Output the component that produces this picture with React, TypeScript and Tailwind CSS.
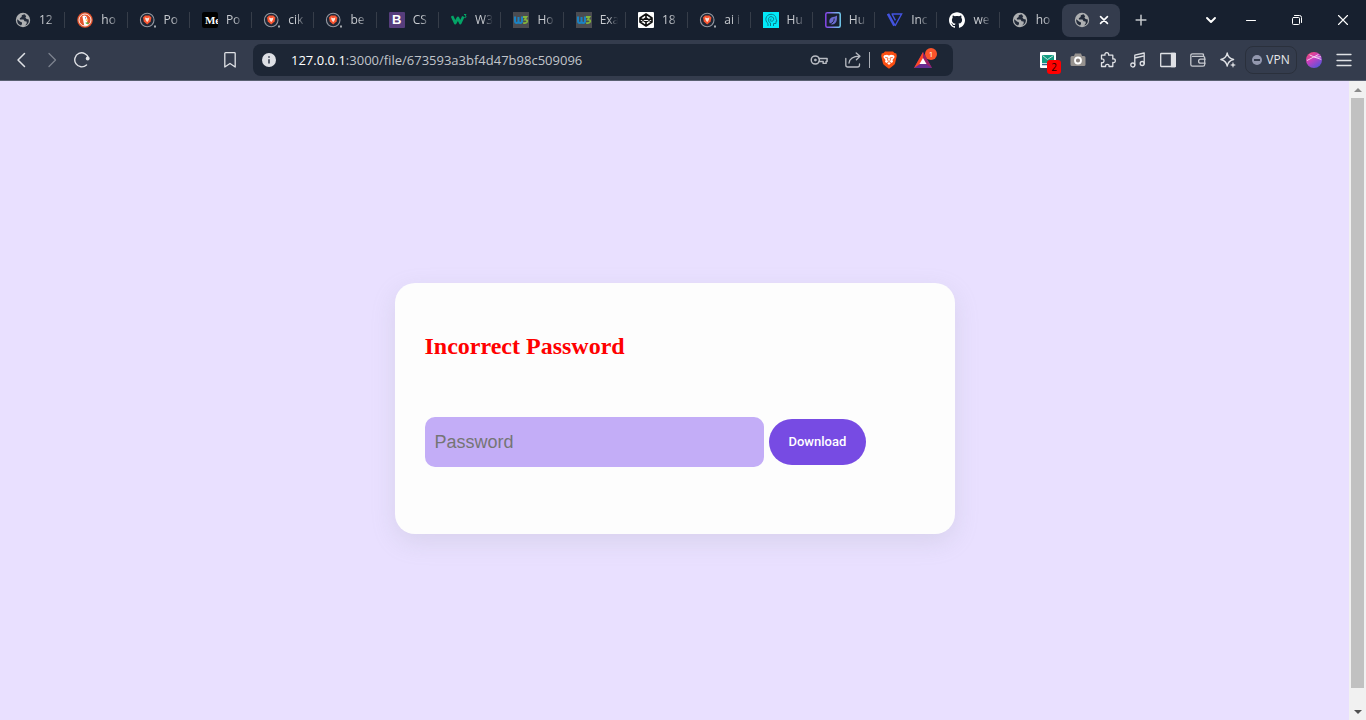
import type { ReactNode } from "react";
import { SiCodepen, SiGithub } from "react-icons/si";

const Globe = () => (
  <svg viewBox="0 0 16 16" className="size-4">
    <circle cx="8" cy="8" r="7.2" fill="#adafb1" />
    <path
      d="M9.5 2.2 L6.8 3.2 L6.6 5 L4.8 6.2 L5 7.6 L8.5 7.4 L9.6 9.2 L11.6 9.4 L11.8 11.2 L10.2 13.6 A6 6 0 0 0 13.8 7.4 L11.6 7 L10.4 5.6 L11.2 4.2 Z M2.2 7.2 L5 9.4 L7 10.4 L7 12 L6 13.6 A6 6 0 0 1 2.2 7.2 Z"
      fill="#232b3a"
    />
  </svg>
);

const BraveSearch = () => (
  <svg viewBox="0 0 16 16" className="size-4 overflow-visible">
    <circle cx="7.2" cy="8" r="6.8" fill="#202736" stroke="#9297a0" strokeWidth="1.1" />
    <path d="M5 3.6 H9.4 L11.4 5.4 L10.6 9.6 L7.2 12.6 L3.8 9.6 L3 5.4 Z" fill="#fa5530" />
    <path d="M5 5.6 L7.2 6.2 L9.4 5.6 L8.8 8 L7.2 10.2 L5.6 8 Z" fill="#fbe3da" />
    <rect x="14" y="13.5" width="2" height="2" fill="#a3a7ae" />
  </svg>
);

const Duck = () => (
  <svg viewBox="0 0 16 16" className="size-4">
    <circle cx="8" cy="8" r="7.8" fill="#e2522b" />
    <circle cx="8" cy="8" r="6" fill="none" stroke="#fff" strokeWidth="0.9" />
    <path d="M5.4 4.2 C7 2.8 10 3.4 10.2 6.6 L10.6 9 L9.8 10 L11 13 Q9 14.2 7.2 13.6 Z" fill="#fff" />
    <path d="M8.6 7.6 L12 7.8 L9 9 Z" fill="#fcb929" />
    <path d="M8.4 10.4 L11.6 10.2 L11.4 12.2 L9 11.8 Z" fill="#5bb53f" />
    <circle cx="8.6" cy="5.8" r="0.6" fill="#2d4f8e" />
  </svg>
);

const MeMark = () => (
  <span className="flex size-4 items-center overflow-hidden rounded-[2px] bg-black pl-[3px] font-['Liberation_Serif',serif] text-[11px] leading-4 font-bold text-white">
    Me
  </span>
);

const Bootstrap = () => (
  <span className="grid size-4 place-items-center rounded-[1px] bg-[#563d7c] font-['Liberation_Sans',sans-serif] text-[13px] leading-4 font-bold text-white">
    B
  </span>
);

const W3Schools = () => (
  <svg viewBox="0 0 16 16" className="size-4" fill="none" stroke="#04a467">
    <path d="M1 4 L4.2 11 L7 6 L9.3 11 L12.3 4.5" strokeWidth="2.7" strokeLinejoin="round" />
    <path d="M13 2.5 H15 L14 4 C15.8 4 15.2 6.2 13.4 5.6" strokeWidth="1" />
  </svg>
);

const W3Docs = () => (
  <svg viewBox="0 0 16 16" className="size-4" fill="none">
    <rect width="16" height="16" fill="#4b4c51" />
    <path d="M2 4.5 V9 Q2 11 3.8 11 Q5.5 11 5.5 9 V5 M5.5 9 Q5.5 11 7.2 11 Q9 11 9 9 V4.5" stroke="#1b83c4" strokeWidth="2" />
    <path d="M10 5 H13.5 L11.8 7.6 Q14.4 7.6 14.2 9.4 Q13.8 11.4 10.2 11" stroke="#82b53c" strokeWidth="1.8" />
  </svg>
);

const Codepen = () => (
  <span className="grid size-4 place-items-center rounded-[1px] bg-white">
    <svg viewBox="0 0 16 16" className="size-4" fill="none" stroke="#111" strokeWidth="1.6" strokeLinejoin="round">
      <path d="M8 2 L14 6 V10 L8 14 L2 10 V6 Z M8 2 V6 M8 10 V14 M2 6 L8 10 L14 6 M2 10 L8 6 L14 10" />
    </svg>
  </span>
);

const Head = () => (
  <svg viewBox="0 0 16 16" className="size-4" fill="none" stroke="#087d8d" strokeWidth="1">
    <rect width="16" height="16" fill="#02e9f8" stroke="none" />
    <path d="M5 14 V11.5 C1.5 9 2.2 2.5 8 2.3 C12 2.3 13 5 13 7 L14 9.2 H13 V11.5 H10.5 V14" />
    <path d="M7.5 14 V11 C4.8 10 4.4 5 8 4.6 C11.6 4.6 11.4 9.4 8.5 9.2 C6.4 9 6.8 6.6 8.5 7" />
  </svg>
);

const Leaf = () => (
  <svg viewBox="0 0 16 16" className="size-4" fill="none">
    <defs>
      <linearGradient id="leaf" x1="0" y1="0" x2="1" y2="0">
        <stop stopColor="#8545e8" />
        <stop offset="1" stopColor="#72c9ee" />
      </linearGradient>
    </defs>
    <rect x="0.8" y="0.8" width="14.4" height="14.4" rx="1.5" stroke="url(#leaf)" strokeWidth="1.5" />
    <path d="M12 3.5 C12 8 12 12 7 12.5 C3.5 12.5 3.5 7 6.5 5.5 C8.5 4.6 10.5 5 12 3.5 Z" fill="#6b6bd0" />
    <path d="M5 12 C8 11 9.2 9 9.2 6.5" stroke="#1c2333" />
  </svg>
);

const Vee = () => (
  <svg viewBox="0 0 16 16" className="size-4" fill="none" stroke="#4353e0">
    <path d="M1 1.8 L7.4 13.6" strokeWidth="2.6" />
    <path d="M4.6 2 H14.6 L8 14 M5 2 L8.4 8.4" strokeWidth="1.4" />
  </svg>
);

const Github = () => <SiGithub className="size-4 text-white" />;

const tabs: { label: string; icon: ReactNode }[] = [
  { label: "12", icon: <Globe /> },
  { label: "ho", icon: <Duck /> },
  { label: "Po", icon: <BraveSearch /> },
  { label: "Po", icon: <MeMark /> },
  { label: "cik", icon: <BraveSearch /> },
  { label: "be", icon: <BraveSearch /> },
  { label: "CS", icon: <Bootstrap /> },
  { label: "W3", icon: <W3Schools /> },
  { label: "Ho", icon: <W3Docs /> },
  { label: "Exa", icon: <W3Docs /> },
  { label: "18", icon: <Codepen /> },
  { label: "ai i", icon: <BraveSearch /> },
  { label: "Hu", icon: <Head /> },
  { label: "Hu", icon: <Leaf /> },
  { label: "Inc", icon: <Vee /> },
  { label: "we", icon: <Github /> },
  { label: "ho", icon: <Globe /> },
];

function Glyph({ children, className = "size-4" }: { children: ReactNode; className?: string }) {
  return (
    <svg viewBox="0 0 16 16" className={className} fill="none" stroke="currentColor" strokeWidth="1.3" strokeLinecap="round" strokeLinejoin="round" aria-hidden="true">
      {children}
    </svg>
  );
}

function IconButton({ label, className = "w-[30px] text-[#dfe1e5]", children }: { label: string; className?: string; children: ReactNode }) {
  return (
    <button type="button" aria-label={label} className={`grid h-8 shrink-0 place-items-center ${className}`}>
      {children}
    </button>
  );
}

function TabStrip() {
  return (
    <div className="flex h-10 items-center bg-[#17202f] pl-[3px]">
      <div className="flex min-w-0 flex-1">
        {tabs.map((tab, i) => (
          <button
            key={i}
            type="button"
            className="flex h-4 min-w-0 flex-1 items-center border-r border-[#363d49] pl-3 last:border-transparent"
          >
            <span className="grid w-4 shrink-0 place-items-center">{tab.icon}</span>
            <span className="ml-2 text-left text-[12px] leading-4 whitespace-nowrap text-[#c8cbd0] [mask-image:linear-gradient(to_right,black_8px,transparent_18px)]">
              {tab.label}
            </span>
          </button>
        ))}
      </div>
      <div className="flex h-[33px] w-[58px] items-center justify-between rounded-lg bg-[#343c4d] pr-[11px] pl-3">
        <Globe />
        <button type="button" aria-label="Close tab" className="text-white">
          <Glyph className="size-[10px]">
            <path d="M2.5 2.5 L13.5 13.5 M13.5 2.5 L2.5 13.5" strokeWidth="2.6" />
          </Glyph>
        </button>
      </div>
      <IconButton label="New tab" className="ml-[6px] w-[30px] text-[#c5c8cd]">
        <Glyph className="size-3"><path d="M8 1.5 V14.5 M1.5 8 H14.5" strokeWidth="2" /></Glyph>
      </IconButton>
      <IconButton label="Search tabs" className="ml-[38px] w-[34px] text-white">
        <Glyph><path d="M4 6 L8 10 L12 6" strokeWidth="1.9" /></Glyph>
      </IconButton>
      <IconButton label="Minimize" className="w-[46px] text-white">
        <Glyph><path d="M3.5 8.5 H12.5" strokeWidth="1" /></Glyph>
      </IconButton>
      <IconButton label="Restore" className="w-[46px] text-white">
        <Glyph>
          <rect x="3.5" y="5.5" width="7" height="7" rx="1" strokeWidth="1" />
          <path d="M5.5 3.5 H10.5 Q12.5 3.5 12.5 5.5 V10.5" strokeWidth="1" />
        </Glyph>
      </IconButton>
      <IconButton label="Close" className="w-[46px] text-white">
        <Glyph><path d="M3.5 3.5 L12.5 12.5 M12.5 3.5 L3.5 12.5" strokeWidth="1.1" /></Glyph>
      </IconButton>
    </div>
  );
}

function AddressBar() {
  return (
    <div className="ml-2 flex h-8 min-w-0 flex-1 items-center rounded-lg bg-[#1d2635] pr-[19px] pl-[9px]">
      <button type="button" aria-label="Site information" className="size-[14px] shrink-0">
        <svg viewBox="0 0 14 14" className="size-[14px]">
          <circle cx="7" cy="7" r="7" fill="#dddfe4" />
          <path d="M7 6.2 V10.5 M7 3.3 V4.8" stroke="#343c4d" strokeWidth="1.6" />
        </svg>
      </button>
      <div className="ml-[15px] min-w-0 flex-1 overflow-hidden text-[13px] leading-5 whitespace-nowrap text-[#c0c4ca]">
        <span className="text-white">127.0.0.1</span>:3000/file/673593a3bf4d47b98c509096
      </div>
      <IconButton label="Passwords" className="w-5 text-[#b9bcc3]">
        <Glyph className="size-[18px]">
          <circle cx="4.7" cy="8" r="3.6" />
          <circle cx="4.7" cy="8" r="0.9" fill="currentColor" strokeWidth="0.6" />
          <path d="M8 6.7 H15.2 V9.3 H14.3 V11 H11.7 V9.3 H8" />
        </Glyph>
      </IconButton>
      <IconButton label="Share" className="ml-[14px] w-5 text-[#b9bcc3]">
        <Glyph>
          <path d="M0.8 6.5 V13 Q0.8 15 2.8 15 H12.5 Q14.5 15 14.5 13 V12" />
          <path d="M4 11 Q5 4.5 14.5 4.2 M11.2 1 L15 4.2 L11.4 7.8" />
        </Glyph>
      </IconButton>
      <span className="ml-[6px] h-4 w-px bg-[#a9adb5]" />
      <IconButton label="Brave Shields" className="ml-[9px] w-5">
        <svg viewBox="0 0 16 18" className="h-[18px] w-4">
          <path d="M4 0.5 H12 L13.5 2 L15.3 2.5 L15.8 5 L14 12.5 Q13.5 14 8 17.7 Q2.5 14 2 12.5 L0.2 5 L0.7 2.5 L2.5 2 Z" fill="#fb4f12" />
          <path d="M3.3 4.2 L6 3.8 L8 4.5 L10 3.8 L12.7 4.2 L13.7 6 L11.5 9 L12 11 L9.7 12.3 L8 14 L6.3 12.3 L4 11 L4.5 9 L2.3 6 Z" fill="#fff" />
          <path d="M4.2 6.3 L7 7 L6.5 9 L8 10.5 L9.5 9 L9 7 L11.8 6.3 M6 11.6 L8 10.8 L10 11.6" fill="none" stroke="#fb4f12" strokeWidth="0.8" />
        </svg>
      </IconButton>
      <IconButton label="Brave Rewards" className="relative ml-[13px] w-[22px]">
        <svg viewBox="0 0 18 16" className="h-4 w-[18px]">
          <path d="M9 0 L18 16 H0 Z" fill="#662d91" />
          <path d="M9 0 L0 16 L6 12 L9 6.5 Z" fill="#ff4724" />
          <path d="M9 0 L18 16 L12 12 L9 6.5 Z" fill="#9e1f63" />
          <path d="M9 6 L12.5 12 H5.5 Z" fill="#fff" />
        </svg>
        <span className="absolute top-1 -right-[3px] grid size-3 place-items-center rounded-full bg-[#fb542b] text-[8px] leading-3 text-white">1</span>
      </IconButton>
    </div>
  );
}

function Toolbar() {
  return (
    <div className="flex h-[41px] items-center border-b border-[#596071] bg-[#343c4d] px-[7px]">
      <IconButton label="Back">
        <Glyph><path d="M10.5 1.5 L4 8 L10.5 14.5" strokeWidth="1.5" /></Glyph>
      </IconButton>
      <IconButton label="Forward" className="w-[30px] text-[#7c828e]">
        <Glyph><path d="M5 1.5 L11.5 8 L5 14.5" /></Glyph>
      </IconButton>
      <IconButton label="Reload">
        <Glyph>
          <path d="M12.5 13 A7 7 0 1 1 14.5 6" strokeWidth="1.4" />
          <circle cx="13.7" cy="6.5" r="1.9" fill="currentColor" stroke="none" />
        </Glyph>
      </IconButton>
      <IconButton label="Bookmark this page" className="ml-[118px] w-[30px] text-[#dfe1e5]">
        <Glyph><path d="M2.8 1.5 Q2.8 0.7 3.6 0.7 H12.4 Q13.2 0.7 13.2 1.5 V15 L8 11.5 L2.8 15 Z" /></Glyph>
      </IconButton>

      <AddressBar />

      <IconButton label="Mail checker" className="relative ml-20 w-[30px]">
        <svg viewBox="0 0 16 16" className="size-4">
          <rect width="16" height="16" rx="1" fill="#fff" />
          <rect x="2" y="3" width="12" height="8" fill="#149c82" />
          <path d="M2.5 3.5 L7.5 7.5 L13.5 3.5" fill="none" stroke="#e8f6f3" strokeWidth="0.8" />
          <path d="M2 12.5 H14" stroke="#315e85" strokeWidth="1.5" />
        </svg>
        <span className="absolute right-[2px] bottom-[2px] grid h-[14px] w-[14px] place-items-center rounded-[3px] bg-[#ff0000] text-[10px] leading-3 text-[#260000]">2</span>
      </IconButton>
      <IconButton label="Screenshot" className="w-[30px] text-[#96928f]">
        <svg viewBox="0 0 16 16" className="size-4">
          <path d="M2 4 H4 L5 1.5 H11 L12 4 H14 Q15.5 4 15.5 5.5 V12.5 Q15.5 14 14 14 H2 Q0.5 14 0.5 12.5 V5.5 Q0.5 4 2 4 Z" fill="currentColor" />
          <circle cx="8" cy="8.5" r="3" fill="#89817e" stroke="#fff" strokeWidth="1.8" />
        </svg>
      </IconButton>
      <IconButton label="Extensions">
        <Glyph>
          <path d="M1.5 3.2 H5 Q4.5 0.7 6.8 0.7 Q9 0.7 8.6 3.2 H12.8 V7 Q15.3 6.4 15.3 8.7 Q15.3 11 12.8 10.4 V14.5 H9 Q9.4 12.4 7.3 12.4 Q5.2 12.4 5.6 14.5 H1.5 V10.7 Q4 11 4 8.8 Q4 6.7 1.5 7 Z" />
        </Glyph>
      </IconButton>
      <IconButton label="Media controls">
        <Glyph>
          <circle cx="2.8" cy="13" r="2" />
          <circle cx="12.2" cy="11.5" r="2" />
          <path d="M4.8 13 V3.2 L14.2 1 V11.5 M4.8 6 L14.2 3.8" />
        </Glyph>
      </IconButton>
      <IconButton label="Sidebar">
        <Glyph>
          <rect x="0.7" y="1.5" width="14.6" height="13" rx="0.5" />
          <path d="M11.5 1.5 H15.3 V14.5 H11.5 Z" fill="currentColor" />
        </Glyph>
      </IconButton>
      <IconButton label="Wallet" className="w-[30px] text-[#c5c8ce]">
        <Glyph>
          <path d="M13.5 4 V3 Q13.5 1.8 12.2 1.8 H2.5 Q0.8 1.8 0.8 3.4 V12.6 Q0.8 14.2 2.4 14.2 H13 Q14.7 14.2 14.7 12.6 V6 Q14.7 4.4 13 4.4 H2.5" />
          <path d="M15 7.2 H10.6 Q8.6 7.2 8.6 9.2 Q8.6 11.2 10.6 11.2 H15" />
        </Glyph>
      </IconButton>
      <IconButton label="Leo AI">
        <Glyph>
          <path d="M7.2 0.8 Q8 6.2 13.6 7.5 Q8 8.8 7.2 14.2 Q6.4 8.8 0.8 7.5 Q6.4 6.2 7.2 0.8 Z" />
          <path d="M13 10.5 L13.7 12.3 L15.5 13 L13.7 13.7 L13 15.5 L12.3 13.7 L10.5 13 L12.3 12.3 Z" fill="currentColor" strokeWidth="0.3" />
        </Glyph>
      </IconButton>
      <button type="button" className="mx-[2px] flex h-7 w-[52px] items-center justify-center gap-1 rounded-lg border border-[#2a303c] text-[12px] leading-4 text-[#e7e9ec]">
        <span className="grid size-[10px] shrink-0 place-items-center rounded-full bg-[#9398ae]">
          <span className="h-[2px] w-[6px] bg-[#343c4d]" />
        </span>
        VPN
      </button>
      <IconButton label="Profile">
        <svg viewBox="0 0 16 16" className="size-4">
          <defs>
            <linearGradient id="ball" x1="0" y1="0" x2="0.7" y2="1">
              <stop stopColor="#fb4b64" />
              <stop offset="0.5" stopColor="#c63fc0" />
              <stop offset="1" stopColor="#5854db" />
            </linearGradient>
          </defs>
          <circle cx="8" cy="8" r="8" fill="url(#ball)" />
          <path d="M1 8.5 L12.5 2.5 M3.5 2.8 L8.5 5.2 L15.2 7.4 M8.5 5.2 L15 4.8" fill="none" stroke="#f7d9f4" strokeWidth="0.9" />
        </svg>
      </IconButton>
      <IconButton label="Menu">
        <Glyph><path d="M1 2.5 H15 M1 8.5 H15 M1 13.5 H15" strokeWidth="1.3" /></Glyph>
      </IconButton>
    </div>
  );
}

function ScrollBar() {
  return (
    <div className="flex w-[17px] shrink-0 flex-col items-center bg-[#f1f1f1]">
      <span className="grid h-[17px] place-items-center">
        <svg viewBox="0 0 8 4" className="h-1 w-2"><path d="M4 0 L8 4 H0 Z" fill="#8b8b8b" /></svg>
      </span>
      <span className="w-[13px] flex-1 bg-[#c1c1c1]" />
      <span className="mt-[15px] grid h-[17px] place-items-center">
        <svg viewBox="0 0 8 4" className="h-1 w-2"><path d="M4 4 L8 0 H0 Z" fill="#505050" /></svg>
      </span>
    </div>
  );
}

export default function App() {
  return (
    <div className="flex min-h-screen flex-col font-['Open_Sans','Noto_Sans',sans-serif]">
      <header>
        <TabStrip />
        <Toolbar />
      </header>
      <div className="flex flex-1">
        <main className="flex flex-1 items-center justify-center bg-[#e9e0ff] pt-4">
          <form
            onSubmit={(e) => e.preventDefault()}
            className="w-full max-w-[560px] rounded-[20px] bg-[#fdfdfd] px-[30px] pt-12 pb-[67px] shadow-[0_8px_24px_rgba(149,157,165,0.2)]"
          >
            <h2 className="font-['Liberation_Serif',serif] text-[24px] leading-[30px] font-bold text-[#ff0000]">Incorrect Password</h2>
            <div className="mt-14 flex items-center gap-[5px]">
              <input
                type="password"
                aria-label="Password"
                placeholder="Password"
                className="h-[50px] w-[339px] min-w-0 rounded-[10px] bg-[#c3adf7] px-[10px] font-['Liberation_Sans',sans-serif] text-[18px] placeholder:text-[#757575] focus:outline-none"
              />
              <button type="submit" className="h-[46px] shrink-0 rounded-full bg-[#774be3] px-5 font-[Roboto,sans-serif] text-[13px] font-medium text-white">
                Download
              </button>
            </div>
          </form>
        </main>
        <ScrollBar />
      </div>
    </div>
  );
}
